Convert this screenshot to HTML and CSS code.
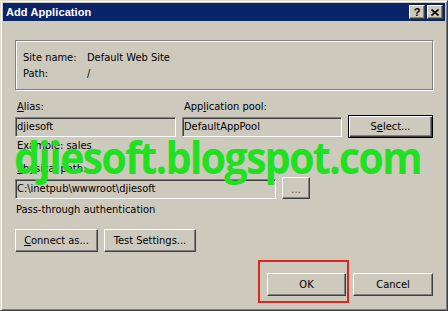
FILE: index.html
```html
<!DOCTYPE html>
<html>
<head>
<meta charset="utf-8">
<title>Add Application</title>
<link rel="stylesheet" href="styles.css">
</head>
<body>
<div class="window">
  <div class="titlebar">
    <span class="title">Add Application</span>
    <div class="tbtns">
      <span class="tbtn">?</span>
      <span class="tbtn">
        <svg width="8" height="7" viewBox="0 0 8 7"><path d="M0.5 0.5 L7.5 6.5 M7.5 0.5 L0.5 6.5" stroke="#000" stroke-width="1.6" fill="none"/></svg>
      </span>
    </div>
  </div>
  <div class="content">
    <div class="group">
      <div class="info-row"><span class="info-label">Site name:</span><span>Default Web Site</span></div>
      <div class="info-row"><span class="info-label">Path:</span><span>/</span></div>
    </div>
    <div class="row3">
      <div class="field">
        <span class="label"><u>A</u>lias:</span>
        <div class="input">djiesoft</div>
      </div>
      <div class="field">
        <span class="label">App<u>l</u>ication pool:</span>
        <div class="input">DefaultAppPool</div>
      </div>
      <button class="btn btn-default select">S<u>e</u>lect...</button>
    </div>
    <div class="label hint">Example: sales</div>
    <div class="label phys"><u>P</u>hysical path:</div>
    <div class="pathrow">
      <div class="input path">C:\inetpub\wwwroot\djiesoft</div>
      <button class="btn browse">...</button>
    </div>
    <div class="label auth">Pass-through authentication</div>
    <div class="btnrow">
      <button class="btn connect"><u>C</u>onnect as...</button>
      <button class="btn test">Test Settin<u>g</u>s...</button>
    </div>
    <div class="footer">
      <div class="ok-wrap">
        <button class="btn ok">OK</button>
        <div class="mark"></div>
      </div>
      <button class="btn cancel">Cancel</button>
    </div>
  </div>
  <div class="watermark">djiesoft.blogspot.com</div>
</div>
</body>
</html>
```
FILE: styles.css
```css
html, body {
  margin: 0;
  padding: 0;
  background: #cdc9bd;
}
body {
  font: 11px "DejaVu Sans Condensed", "DejaVu Sans", sans-serif;
  font-stretch: condensed;
  color: #000;
}
.window {
  position: relative;
  width: 448px;
  height: 311px;
  box-sizing: border-box;
  background: #cdc9bd;
  border: 1px solid;
  border-color: #e0dcd2 #404040 #404040 #e0dcd2;
  box-shadow: inset 1px 1px #ffffff, inset -1px -1px #808080;
  padding: 2px;
  overflow: hidden;
}
.titlebar {
  height: 18px;
  background: #0a246a;
  display: flex;
  align-items: center;
  justify-content: space-between;
  padding: 0 2px 0 3px;
  color: #fff;
}
.title {
  font: bold 11px "Liberation Sans", Arial, sans-serif;
  letter-spacing: 0.1px;
}
.tbtns {
  display: flex;
  gap: 2px;
}
.tbtn {
  box-sizing: border-box;
  width: 16px;
  height: 14px;
  background: #cdc9bd;
  border: 1px solid;
  border-color: #fff #404040 #404040 #fff;
  box-shadow: inset -1px -1px #808080;
  display: flex;
  align-items: center;
  justify-content: center;
  color: #000;
  font: bold 11px "Liberation Sans", Arial, sans-serif;
  line-height: 1;
}
.content {
  padding: 19px 12px 0;
}
.group {
  height: 50px;
  box-sizing: border-box;
  border: 1px solid #808080;
  box-shadow: inset 1px 1px #fff, 1px 1px #fff;
  padding: 9px 7px 0;
}
.info-row {
  display: flex;
  line-height: 16px;
}
.info-label {
  width: 64px;
}
.label {
  display: block;
  line-height: 16px;
  padding-left: 2px;
}
.row3 {
  display: grid;
  grid-template-columns: 161px 160px 85px;
  column-gap: 6px;
  align-items: end;
  margin-top: 9px;
}
.field {
  display: flex;
  flex-direction: column;
  gap: 2px;
}
.input {
  box-sizing: border-box;
  height: 20px;
  border: 1px solid;
  border-color: #808080 #fff #fff #808080;
  box-shadow: inset 1px 1px #404040;
  padding: 0 1px;
  line-height: 18px;
  white-space: nowrap;
  overflow: hidden;
}
.btn {
  box-sizing: border-box;
  height: 23px;
  font: inherit;
  color: #000;
  background: #cdc9bd;
  border: 1px solid;
  border-color: #fff #404040 #404040 #fff;
  box-shadow: inset -1px -1px #808080;
  padding: 0;
  margin: 0;
  line-height: 20px;
}
.btn-default {
  border: 1px solid #000;
  box-shadow: inset 1px 1px #fff, inset -1px -1px #404040, inset -2px -2px #808080;
}
.select {
  margin-bottom: -1px;
}
.hint {
  margin-top: 1px;
}
.phys {
  margin-top: 7px;
}
.pathrow {
  display: flex;
  align-items: flex-end;
  gap: 6px;
}
.path {
  width: 261px;
}
.browse {
  width: 28px;
  height: 22px;
  color: #555;
  line-height: 24px;
}
.auth {
  margin-top: 3px;
  padding-left: 1px;
}
.btnrow {
  display: flex;
  gap: 6px;
  margin-top: 11px;
}
.connect {
  width: 83px;
}
.test {
  width: 92px;
}
.footer {
  display: flex;
  justify-content: flex-end;
  gap: 7px;
  margin-top: 21px;
}
.ok-wrap {
  position: relative;
}
.ok {
  width: 79px;
}
.cancel {
  width: 80px;
}
.mark {
  position: absolute;
  left: -9px;
  top: -13px;
  width: 91px;
  height: 43px;
  box-sizing: border-box;
  border: 2px solid #e0261e;
  pointer-events: none;
}
.watermark {
  position: absolute;
  left: 13px;
  top: 133px;
  font: 700 45px "Open Sans", "Noto Sans", sans-serif;
  font-stretch: normal;
  letter-spacing: -2px;
  line-height: 1;
  color: #21e021;
  white-space: nowrap;
  transform: scaleX(0.92);
  transform-origin: left center;
}
```
